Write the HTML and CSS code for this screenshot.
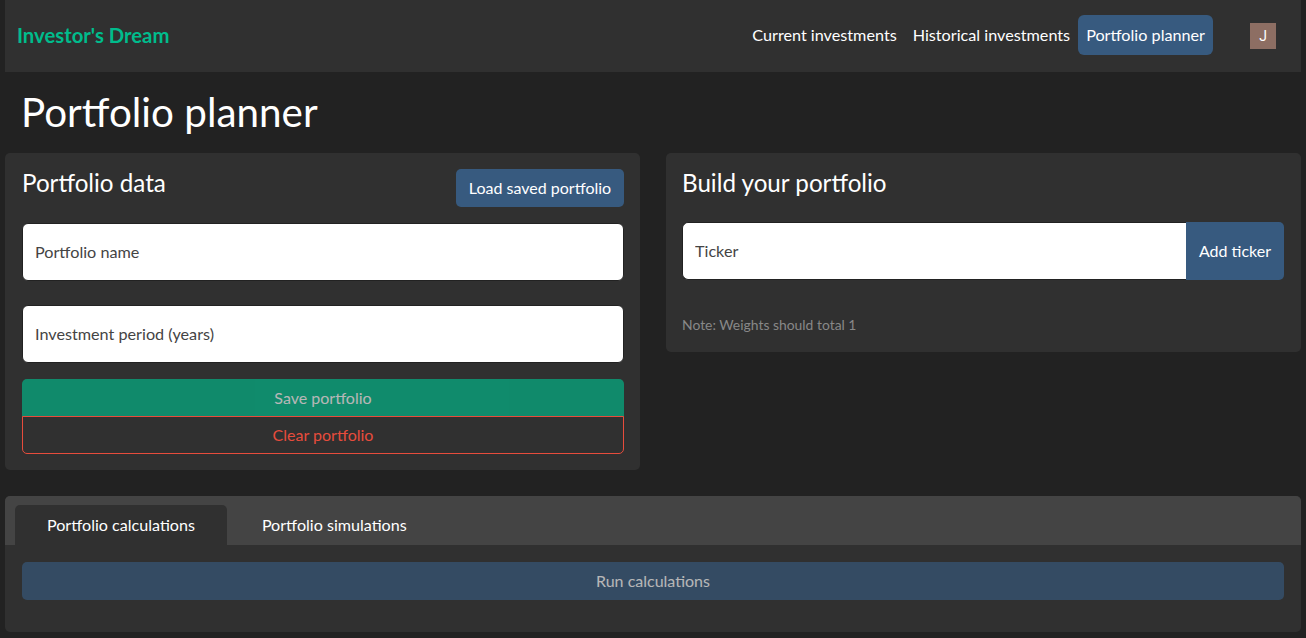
FILE: index.html
```html
<!DOCTYPE html>
<html lang="en">
<head>
<meta charset="utf-8">
<title>Portfolio planner</title>
<link rel="stylesheet" href="styles.css">
</head>
<body>
<div class="app">
  <nav class="navbar">
    <a class="brand">Investor's Dream</a>
    <div class="nav-links">
      <a class="nav-link">Current investments</a>
      <a class="nav-link">Historical investments</a>
      <a class="nav-link active">Portfolio planner</a>
    </div>
    <span class="avatar">J</span>
  </nav>
  <h1 class="page-title">Portfolio planner</h1>
  <div class="columns">
    <section class="card card-left">
      <div class="card-head">
        <h4 class="card-title">Portfolio data</h4>
        <button class="btn btn-blue">Load saved portfolio</button>
      </div>
      <input class="field field-name" placeholder="Portfolio name">
      <input class="field field-period" placeholder="Investment period (years)">
      <div class="stack">
        <button class="btn-block btn-green">Save portfolio</button>
        <button class="btn-block btn-danger">Clear portfolio</button>
      </div>
    </section>
    <section class="card card-right">
      <h4 class="card-title build-title">Build your portfolio</h4>
      <div class="input-group">
        <input class="field group-field" placeholder="Ticker">
        <button class="btn-add">Add ticker</button>
      </div>
      <p class="note">Note: Weights should total 1</p>
    </section>
  </div>
  <section class="tabs-card">
    <div class="tabs">
      <a class="tab active">Portfolio calculations</a>
      <a class="tab">Portfolio simulations</a>
    </div>
    <div class="tab-body">
      <button class="btn-run">Run calculations</button>
    </div>
  </section>
</div>
</body>
</html>
```
FILE: styles.css
```css
* { box-sizing: border-box; }
html, body { margin: 0; height: 100%; }
body {
  background: #222;
  color: #fff;
  font-family: Lato, "Liberation Sans", sans-serif;
  font-size: 16.2px;
  overflow: hidden;
}
.app { padding: 0 5px; width: 1306px; }
.navbar {
  display: flex;
  align-items: center;
  height: 72px;
  background: #303030;
  padding: 0 25px 2px 12px;
}
.brand { color: #00bc8c; font-size: 20.3px; font-weight: 700; margin-right: auto; }
.nav-links { display: flex; align-items: center; }
.nav-link { padding: 10px 8px; line-height: 20px; color: #fff; border-radius: 6px; height: 40px; }
.nav-link.active { background: #375a7f; }
.avatar {
  display: flex; align-items: center; justify-content: center;
  width: 26px; height: 26px; margin: 2px 0 0 37px;
  background: #8d6e63; color: #fff; font-family: Roboto, sans-serif; font-size: 14px;
}
.page-title { margin: 0; font-size: 40.4px; font-weight: 400; line-height: 48px; padding: 16px 0 0 16px; height: 81px; }
.columns { display: flex; gap: 26px; align-items: flex-start; }
.card { background: #303030; border-radius: 5px; padding: 16px 17px; }
.card-left { width: 635px; height: 317px; padding-right: 16px; }
.card-right { width: 635px; height: 199px; padding-left: 16px; }
.card-head { display: flex; justify-content: space-between; align-items: flex-start; height: 54px; }
.card-title { margin: 0; font-size: 24.2px; font-weight: 400; line-height: 27px; }
.build-title { height: 53px; }
.btn { border: 0; border-radius: 5px; color: #fff; font: inherit; font-size: 16px; cursor: pointer; padding: 0 0 2px; }
.btn-blue { background: #375a7f; width: 168px; height: 38px; }
.field {
  display: block; width: 100%; height: 58px; background: #fff; color: #303030;
  border: 1px solid #222; border-radius: 6px; padding: 0 12px 2px; font: inherit; outline: 0;
}
.field::placeholder { color: #444; opacity: 1; }
.field-name { margin-bottom: 24px; }
.field-period { margin-bottom: 16px; }
.stack { display: flex; flex-direction: column; }
.btn-block { height: 38px; width: 100%; font: inherit; font-size: 16px; border-radius: 5px; padding: 0 0 2px; }
.btn-green { background: #00bc8c; color: #fff; opacity: 0.65; border: 0; border-radius: 5px 5px 0 0; }
.btn-danger { position: relative; z-index: 1; background: transparent; color: #e74c3c; border: 1px solid #e74c3c; border-radius: 0 0 5px 5px; margin-top: -1px; }
.input-group { display: flex; }
.group-field { flex: 1; border-radius: 6px 0 0 6px; border-right: 0; }
.btn-add { width: 98px; height: 58px; background: #375a7f; border: 0; color: #fff; font: inherit; font-size: 16px; border-radius: 0 5px 5px 0; padding: 0 0 2px; }
.note { margin: 36px 0 0; font-size: 13.9px; line-height: 17px; color: #888; }
.tabs-card { margin-top: 26px; background: #303030; border-radius: 5px; height: 136px; }
.tabs { display: flex; gap: 3px; height: 49px; background: #444; padding: 9px 10px 0; border-radius: 5px 5px 0 0; }
.tab { padding: 10px 32px; line-height: 20px; height: 40px; color: #fff; font-size: 16.1px; border-radius: 5px 5px 0 0; }
.tab.active { background: #303030; }
.tab-body { padding: 17px; }
.btn-run { width: 100%; height: 38px; border: 0; background: #375a7f; color: #fff; opacity: 0.65; font: inherit; font-size: 16px; border-radius: 5px; padding: 0 0 2px; }
```
